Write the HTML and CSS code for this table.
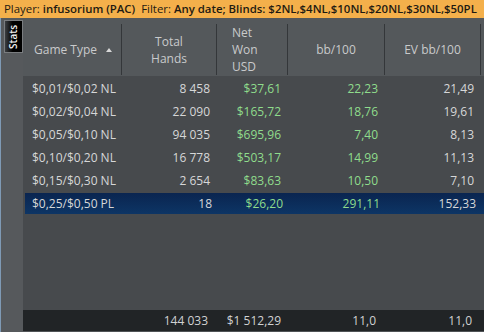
FILE: index.html
```html
<!DOCTYPE html>
<html>
<head>
<meta charset="utf-8">
<link rel="stylesheet" href="styles.css">
</head>
<body>
<div class="app">
  <div class="filterbar">
    <span>Player: </span><b>infusorium (PAC)</b><span class="gap">Filter: </span><b>Any date; Blinds: $2NL,$4NL,$10NL,$20NL,$30NL,$50PL</b>
  </div>
  <div class="main">
    <div class="sidebar">
      <div class="tab"><span>Stats</span></div>
    </div>
    <div class="grid">
      <div class="thead">
        <div class="th th-left">Game Type <span class="arrow"></span></div>
        <div class="th th-center">Total<br>Hands</div>
        <div class="th th-net">Net<br>Won<br>USD</div>
        <div class="th th-center">bb/100</div>
        <div class="th th-center">EV bb/100</div>
      </div>
      <div class="tbody">
        <div class="row"><div class="td name">$0,01/$0,02 NL</div><div class="td">8 458</div><div class="td pos">$37,61</div><div class="td pos">22,23</div><div class="td">21,49</div></div>
        <div class="row"><div class="td name">$0,02/$0,04 NL</div><div class="td">22 090</div><div class="td pos">$165,72</div><div class="td pos">18,76</div><div class="td">19,61</div></div>
        <div class="row"><div class="td name">$0,05/$0,10 NL</div><div class="td">94 035</div><div class="td pos">$695,96</div><div class="td pos">7,40</div><div class="td">8,13</div></div>
        <div class="row"><div class="td name">$0,10/$0,20 NL</div><div class="td">16 778</div><div class="td pos">$503,17</div><div class="td pos">14,99</div><div class="td">11,13</div></div>
        <div class="row"><div class="td name">$0,15/$0,30 NL</div><div class="td">2 654</div><div class="td pos">$83,63</div><div class="td pos">10,50</div><div class="td">7,10</div></div>
        <div class="row selected"><div class="td name">$0,25/$0,50 PL</div><div class="td">18</div><div class="td pos">$26,20</div><div class="td pos">291,11</div><div class="td">152,33</div></div>
      </div>
      <div class="tfoot">
        <div class="td name"></div><div class="td">144 033</div><div class="td">$1 512,29</div><div class="td">11,0</div><div class="td">11,0</div>
      </div>
    </div>
  </div>
</div>
</body>
</html>
```
FILE: styles.css
```css
html, body {
  margin: 0;
  padding: 0;
}
body {
  width: 484px;
  height: 332px;
  overflow: hidden;
  background: #474a4d;
  font-family: "Open Sans", "Noto Sans", sans-serif;
}
.app {
  display: flex;
  flex-direction: column;
  height: 332px;
}
.filterbar {
  height: 18px;
  line-height: 18px;
  background: #f4b04b;
  color: #1e1a12;
  font-size: 11.4px;
  padding-left: 4px;
  white-space: nowrap;
  overflow: hidden;
}
.filterbar b { font-weight: 600; }
.filterbar .gap { margin-left: 6px; }
.main {
  flex: 1;
  display: flex;
  min-height: 0;
}
.sidebar {
  width: 23px;
  border-left: 1px solid #7f9ab5;
  background: #56595c;
  padding-top: 2px;
  box-sizing: border-box;
}
.tab {
  margin-left: 3px;
  width: 19px;
  height: 33px;
  box-sizing: border-box;
  border: 1px solid #7a7d80;
  background: linear-gradient(to right, #3c3f42, #000 45%, #000);
  display: flex;
  align-items: center;
  justify-content: center;
}
.tab span {
  display: block;
  transform: rotate(-90deg);
  color: #f2f2f2;
  font-size: 10px;
  font-weight: 600;
  white-space: nowrap;
}
.grid {
  flex: 1;
  display: flex;
  flex-direction: column;
}
.thead, .row, .tfoot {
  display: grid;
  grid-template-columns: 99px 95px 71px 97px 96px;
}
.thead {
  height: 58px;
  background: #54585b;
  color: #c9cacb;
  font-size: 12px;
  padding: 6px 0 4px;
  box-sizing: border-box;
}
.th {
  border-right: 1px solid #34373a;
  display: flex;
  align-items: center;
  line-height: 17px;
}
.th-left { padding-left: 11px; }
.th-center { justify-content: center; text-align: center; }
.th-net { padding-left: 15px; }
.arrow {
  display: inline-block;
  margin-left: 9px;
  width: 0;
  height: 0;
  border-left: 3.5px solid transparent;
  border-right: 3.5px solid transparent;
  border-bottom: 4px solid #d8d8d8;
}
.tbody {
  flex: 1;
  padding-top: 1px;
}
.row {
  height: 23px;
  align-items: center;
  font-size: 12px;
  color: #d6d7d8;
}
.td {
  text-align: right;
  padding-right: 7px;
  white-space: nowrap;
}
.td.name {
  text-align: left;
  padding-left: 9px;
  padding-right: 0;
}
.pos { color: #8fdc8c; }
.row.selected {
  background: linear-gradient(to bottom, #0a2550, #0d3565);
  margin-left: 2px;
  height: 21px;
  margin-top: 1px;
}
.row.selected .td.name { padding-left: 7px; }
.tfoot {
  height: 21px;
  align-items: center;
  background: #212426;
  color: #d0d1d2;
  font-size: 12px;
  border-bottom: 1px solid #505356;
}
.tfoot .td { padding-right: 9px; }
.tfoot .td:nth-child(3) { padding-right: 7px; }
```
